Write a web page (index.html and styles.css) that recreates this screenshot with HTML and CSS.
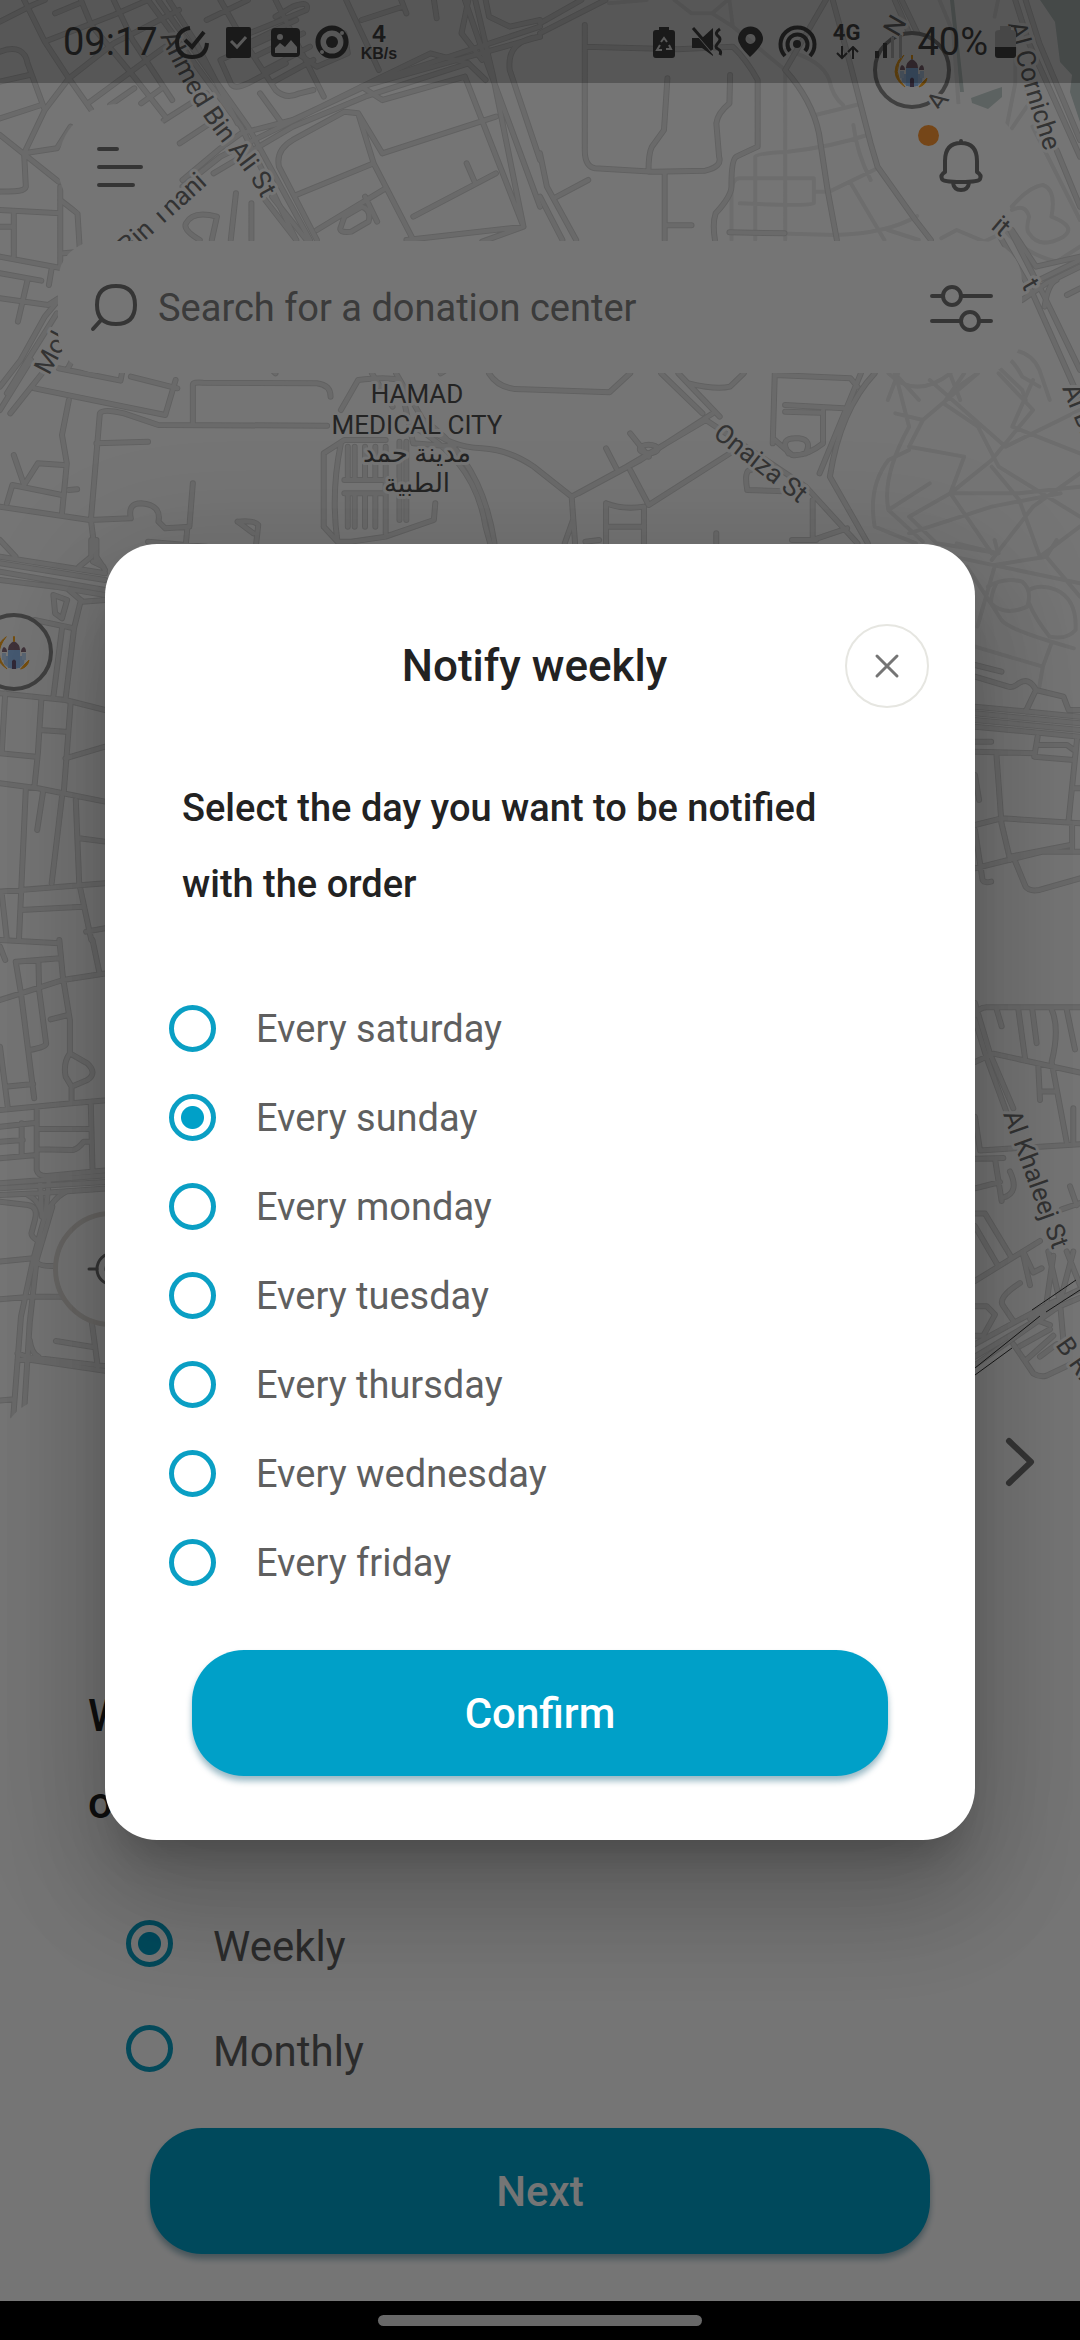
FILE: index.html
```html
<!DOCTYPE html>
<html lang="en">
<head>
<meta charset="utf-8">
<meta name="viewport" content="width=device-width, initial-scale=1">
<title>Notify weekly</title>
<link rel="stylesheet" href="styles.css">
</head>
<body>
<div class="phone">
  <div class="app">
    <main class="map-screen">
      <svg class="map" viewBox="0 0 1080 1430" preserveAspectRatio="xMidYMin slice" aria-hidden="true">
        <defs>
          <g id="roads">
            <!-- north west -->
            <g transform="scale(.3444 .3333)">
              <path d="M70 0L130 125L200 235L265 330M0 65L95 15L130 0M130 125L330 45L430 0M235 0L265 75L385 225L480 350M0 155C50 135 75 155 80 190L130 330M0 245L85 225M0 355L120 315M200 235L130 330L70 460L165 445L205 380M0 405L170 545M70 460L75 560C70 580 20 572 0 575M200 235L330 130L520 30M255 310L400 200L480 140M330 0L385 120L500 300M160 40L230 10M320 315L390 265M410 310L470 265M475 362L600 280M522 430L610 370M0 630L175 640M175 560L175 800M175 600L225 640L232 755L185 760M0 770L180 805M40 640L40 770M0 680L35 680M0 820L120 842M150 805L142 855M80 840L52 965M0 895L140 915L170 895M170 900L130 950L60 1080L0 1160M165 940L20 1180M170 1105L350 1142L355 1115M215 1070L195 1110M380 1130L515 1165"/>
              <path d="M430 0L700 380L860 720M460 0L720 380L900 720M490 0L570 130L690 370M530 560L640 470L1050 260L1568 110M530 540L640 445L700 400L850 360L1100 240L1568 80M620 520L850 380L1060 290L1360 190L1410 240"/>
              <path d="M640 0L700 110L800 270Q830 300 870 280L910 270M600 60L720 0M640 180L830 90M700 110L890 30Q900 0 850 20L800 50M720 130L860 60M740 170L880 100M770 210L900 140M795 245L910 180M800 0L940 290M640 180L670 250Q680 270 720 250L830 190M850 150L920 200L1010 160L1000 100M1005 0L1100 210M1050 260L1110 300M1050 60L1170 20M1165 0L1180 40M1260 0L1268 55M755 280L815 365M1350 0L1400 150L1568 620M1380 0L1430 220L1520 680M1410 0L1420 50L1480 80L1568 60M1568 110Q1470 120 1480 210L1568 480M1400 180L1340 100L1360 0M1360 190L1250 160L1050 260M1350 230L1110 300M1350 230L1520 680L1180 720M1110 460L1440 350M1110 460L1040 340L1000 335L850 420Q800 450 810 500L920 720M860 585L1085 490L1040 340M1085 490L1200 720M1120 565L920 690M1200 650L1440 520M1355 490L1380 550M990 680Q980 700 1020 695L1070 665Q1080 630 1050 620L1000 650ZM1060 590L1095 665M670 720L685 580M730 720V610M580 720Q530 690 540 670Q560 630 630 650L615 720M770 600L860 720M790 590L890 720M1400 725L1520 680"/>
            </g>
            <!-- north east -->
            <g transform="translate(540 0) scale(.3444 .3333)">
              <path d="M130 75V450Q130 500 160 505L330 515L480 512Q530 500 520 470L512 370Q515 340 550 310L552 225M130 140L400 148L560 140Q600 180 632 240V440L570 470Q555 480 556 560Q555 590 510 640Q500 670 508 720M370 235L360 390L325 440Q315 460 315 515M362 515V720M362 676H440M40 595L140 540M830 0L712 210Q790 300 810 400L835 570L862 720M850 0L900 190L960 430L980 500L1090 660L1135 720M0 460L20 560L105 720M0 590L65 720M550 697L710 700M0 100L190 0M0 70L120 0"/>
              <path d="M1030 0L1085 130M1050 0L1110 130M1380 0L1420 130L1568 470M1410 0L1450 130L1568 420M1500 450L1568 620M1330 700L1430 880L1568 1200M1360 680L1460 880L1568 1110M1430 850L1568 780M1400 900L1470 850L1568 800M1370 690L1440 800L1568 770M1465 920Q1475 850 1500 840M1530 885L1568 865"/>
            </g>
            <!-- below the search field -->
            <g transform="translate(0 360) scale(.6887 .3333)">
              <path d="M0 150L45 0M15 160L65 30M50 85L240 165L255 60M100 120L90 225L97 310L90 460M20 285L35 375L55 310L92 315M10 430L18 375L90 405M0 440L130 480L190 475Q185 430 205 430Q235 435 230 485L240 505L275 500L280 370M140 250L215 245M140 610L132 480L145 160Q150 145 180 160L230 195L475 197M280 190V75Q280 65 295 68L460 70Q480 75 480 110M135 605L150 620M300 560L215 545M272 505L270 550M345 485Q370 480 375 495L372 550M345 485L368 520M100 390L112 388M470 500V280L500 240L560 240M470 500L490 545H510L560 530L630 480L632 430M505 260V360M515 260V360M530 260V360M545 260V360M505 500V405M515 500V405M530 500V405M545 500V405M560 260V520M580 245V480M590 245V480M500 360H560M500 400H560M490 545Q480 400 495 250M495 150L520 60Q560 50 580 60L600 250L660 260M540 40L570 140M575 40L620 200Q650 260 700 265Q740 270 775 320L830 410M600 200Q690 300 705 500L712 552M615 180Q700 300 718 550M830 410L910 320L1025 180M840 400L930 300L1035 160M830 410L835 550M820 550L832 480M710 40Q725 90 760 88L885 97L915 40M960 40L1020 160M985 40L1045 170M1000 70Q1040 90 1060 80L1080 40M1125 40L1122 250M1125 45L1235 55L1245 80M1140 135L1225 145M1140 155L1190 158M1250 40L1190 340M1270 40Q1220 150 1205 350L1260 550M1025 180L1170 380L1245 550M1180 420V540L1230 505M1085 390Q1080 330 1090 330M1085 390L1160 395M1195 150V250Q1170 290 1150 285L1125 240M1145 280Q1130 230 1160 235Q1180 240 1170 280M915 220L942 290M880 265L895 325M915 330L942 435L1060 280M880 430Q905 450 935 440V550M880 430V550M880 500H935M1040 520V550M850 545L870 540M1150 540H1185"/>
              <circle cx="942" cy="267" r="13"/>
              <path d="M400 40L380 0M640 40L655 20"/>
            </g>
            <!-- west of the dialog -->
            <g transform="translate(0 540) scale(.3444 .3333)">
              <path d="M0 50L305 100M0 70L305 120M0 95L305 150M0 120L160 140L305 165M265 0V50L230 80M280 0V50L305 90M0 0L45 50M155 165L195 180L180 235L160 220ZM100 240L215 265M235 180L215 265L190 480M180 265L155 470M305 180L240 185L200 150M0 460L190 480L305 510M15 460L5 640M120 480L110 640L100 740M115 570L190 575M205 490L185 760M0 640L105 650M190 655L305 620M0 730L110 745L305 785M75 745L55 1200M125 755L108 870M180 770L150 1030M220 780L230 1030L265 1200M230 895L305 905M0 1055L305 1030M60 1110L240 1100M5 1060L20 1200M250 1175L305 1165"/>
            </g>
            <g transform="translate(0 940) scale(.3492 .3333)">
              <path d="M0 0L170 10M0 20L15 60M170 0L180 110L200 240V340L250 370Q280 400 250 420L205 440V485M200 340Q180 370 188 410L205 440M0 180L60 160L180 120L315 98M265 0L285 100M170 55L45 65L60 160L98 475M110 60L112 150L132 310Q135 320 85 330M145 238L195 225M0 320L22 500M15 440L95 432M0 510L205 490L315 480M105 510V690Q110 710 135 708L315 690M105 567H260M260 495L265 690M105 628L210 630Q225 625 240 605L260 605M0 560L105 548M0 605L65 600M62 550V645M0 655L105 645M0 730L315 705M0 745L315 725M0 765L110 760L315 745M0 785L80 795Q110 800 100 840L90 880Q90 890 105 900M115 730L120 830M140 720L130 830M80 765Q110 780 120 820M190 755Q140 780 120 860L95 960L60 1130L38 1430M150 800L105 960L85 1150L70 1400M0 965L95 955M105 965Q110 980 160 978M0 1078L90 1070H180M50 1240L75 1250L315 1280M50 1260L90 1260L315 1295M85 1200Q90 1240 110 1250M160 1203L270 1222M262 1140L280 1280M0 1382L40 1378"/>
            </g>
            <!-- east of the dialog -->
            <g transform="translate(540 540) scale(.3444 .3333)">
              <path d="M1263 410L1360 440Q1370 445 1390 430Q1420 410 1440 450L1520 470L1535 510H1568M1263 375L1340 395M1440 450L1410 515M1263 500L1568 530M1263 520L1568 550M1263 540L1568 570M1263 560L1568 590M1263 605H1310M1263 635L1435 640M1445 590L1435 650L1550 660M1450 615H1530L1550 630M1325 640L1340 850L1365 960M1263 855L1340 835L1568 850M1263 985L1360 960L1460 935L1568 935M1263 870L1285 1020Q1290 1030 1310 1025M1365 950L1540 915M1545 850V930M1560 590L1535 840M1380 965L1410 1040Q1420 1055 1450 1050L1568 1015M1263 705L1275 780M1548 745H1568"/>
            </g>
            <g transform="translate(860 940) scale(.3333 .4209)">
              <path d="M345 180Q355 160 380 160H660M345 190L380 280L440 410M345 150L390 270L460 400M345 290L400 270L660 315M410 165L425 205M475 165L495 280M517 165L530 245M575 165Q600 210 575 290L620 480M620 165L645 260M535 300L540 380M540 360H585M345 420L360 500L660 485M640 400V480M345 520L430 518M405 520L425 620M345 590L420 575M450 550Q480 600 430 612M345 650H375L455 755M345 680L415 775M345 810L540 715M490 750L510 820M490 740L520 790L545 780M605 640L660 625M630 585L650 630M345 960L460 910L580 860L660 830M345 990L450 940L600 870L660 850M345 1010L580 880M565 740L600 860L510 900M580 750L560 860M620 740L660 820M640 740L600 860L610 950M345 870H380L405 890L370 940H345M480 815Q410 850 430 870L460 905M460 960L520 1030Q540 1040 560 1035L640 1005M480 965L570 925M495 1000L580 940M540 990L590 960M520 900L570 915"/>
            </g>
          </g>
          <g id="paths">
            <g transform="translate(540 0) scale(.3444 .3333)">
              <path d="M200 10L310 0M390 0L440 40L500 40L545 0M500 40L560 80L550 0M560 80L712 210V720M712 150Q820 180 840 240Q850 290 880 315M800 345L930 312M625 720V470Q630 460 720 455Q850 440 950 405M556 720V570Q560 535 580 535H795V610Q790 620 580 610M795 575H840L980 505M910 375Q920 460 960 540M900 545L1000 720M556 697L860 705Q1010 700 1095 648M1010 690L1100 720M1160 0L1200 100L1215 310M1330 0L1320 50M1380 130V250L1355 380M1370 385L1420 310L1400 200M1370 620Q1420 560 1460 555Q1500 570 1485 650Q1560 680 1520 710Q1450 750 1420 700Q1410 690 1420 650Q1410 610 1370 630M1340 680Q1400 760 1500 785L1568 740M1430 380L1568 660M1165 715L1210 690L1290 725L1340 700M1375 1050Q1430 1060 1450 1110L1480 1200M1360 1075Q1380 1090 1400 1130L1450 1160M1330 1100L1400 1170L1410 1200M1030 1120L1100 1200M1040 1120L1010 1200M1190 1120L1220 1200M1200 1170L1270 1120"/>
            </g>
            <g transform="translate(0 360) scale(.6887 .3333)">
              <path d="M1290 40Q1330 120 1380 40M1300 40L1320 200Q1280 350 1290 450L1340 545M1300 160L1340 180L1320 260L1400 290L1380 400L1440 580M1400 40L1370 130L1420 200L1450 320L1568 470M1420 40L1340 180M1320 270L1290 300Q1260 380 1270 500L1330 550M1350 60L1460 260L1568 150M1450 40L1500 150L1440 300L1380 400L1320 470L1360 550L1450 580M1500 60L1470 200L1568 280M1380 400L1480 400L1568 380M1440 320L1480 420L1510 590L1568 500M1320 520L1440 440L1540 400M1290 450L1350 370M1568 340L1500 440L1440 600"/>
            </g>
            <g transform="translate(540 540) scale(.3444 .3333)">
              <path d="M1210 10L1330 40L1320 0M1200 50L1568 130M1320 75L1470 50L1500 0M1470 50L1568 170M1320 80L1270 260M1300 140Q1350 110 1400 125Q1430 150 1415 200Q1350 230 1310 190Q1310 160 1325 130M1420 150Q1450 130 1500 150Q1560 180 1555 270Q1530 300 1480 290Q1440 240 1420 190M1240 80L1340 240Q1360 270 1550 325M1263 320L1460 380L1450 440M1485 310L1460 380"/>
            </g>
          </g>
        </defs>
        <path class="water" d="M1040 0H1080V122L1070 92L1072 75L1060 62L1055 22Z"/>
        <path class="water" d="M971 98L982 94L993 90L1002 87V97L988 109L972 103ZM950 0H954L964 92H960Z"/>
        <use href="#paths" class="footpath"/>
        <use href="#roads" class="road-edge"/>
        <use href="#roads" class="road"/>
        <path class="rail" d="M975 1375L1012 1348M975 1368L1040 1316M1032 1310L1076 1280M1046 1312L1080 1290"/>

        <path id="ahmed" d="M160 36C185 90 200 115 232 155S264 205 272 222" fill="none"/>
        <text class="label"><textPath href="#ahmed">Ahmed Bin Ali St</textPath></text>
        <text class="label" transform="translate(128 256) rotate(-42)">Bin Thani</text>
        <text class="label" transform="translate(49 376) rotate(-62)">Mok</text>
        <g class="place" text-anchor="middle">
          <text x="417" y="403">HAMAD</text>
          <text x="417" y="434">MEDICAL CITY</text>
          <text x="417" y="462">مدينة حمد</text>
          <text x="417" y="492">الطبية</text>
        </g>
        <text class="label" transform="translate(712 436) rotate(38)">Onaiza St</text>
        <path id="corniche" d="M1008 24Q1024 90 1046 156" fill="none"/>
        <text class="label"><textPath href="#corniche">Al Corniche</textPath></text>
        <text class="label" transform="translate(1003 1114) rotate(70)">Al Khaleej St</text>
        <text class="label" transform="translate(1055 1345) rotate(55)">B Ring</text>
        <text class="label" transform="translate(1062 388) rotate(68)">Al Bidda</text>

        <g id="mosque" transform="translate(912 70)">
          <circle class="pin-ring" r="37"/>
          <path d="M-8 -15Q-22 2 -7 17Q-20 8 -16 -4Q-14 -11 -8 -15M10 13L15 8Q14 15 7 17Z" fill="#ffab20" stroke="#ffab20"/>
          <path d="M-11 4H11L10 12Q0 22 -10 12Z" fill="#b4d4fa"/>
          <path d="M-6 -2H6V16H-6Z" fill="#96c4f8"/>
          <path d="M-6 -2Q-6 -8 0 -11Q6 -8 6 -2ZM-12 0Q-12 -4 -10 -5Q-7 -4 -7 0ZM12 0Q12 -4 10 -5Q7 -4 7 0Z" fill="#8a6d7c"/>
          <path d="M-12 1H-8V8H-12ZM8 1H12V8H8Z" fill="#c5defa"/>
          <path d="M-2 17V9Q0 6 2 9V17Z" fill="#6b5a78"/>
          <path d="M0 -11V-15" stroke="#ffab20" stroke-width="2"/>
        </g>
        <use href="#mosque" x="-898" y="582"/>
        <text class="label" transform="translate(898 38) rotate(-60)">N</text>
        <text class="label" transform="translate(940 113) rotate(-55)">A</text>
        <text class="label" transform="translate(990 228) rotate(40)">it</text>
        <text class="label" transform="translate(1021 285) rotate(60)">t</text>
      </svg>

      <header class="top">
        <div class="toolbar">
          <button class="round-button" type="button" aria-label="Menu">
            <svg width="52" height="52" viewBox="0 0 52 52"><path d="M6 10H24M6 28H48M6 46H40" class="line-icon"/></svg>
          </button>
          <button class="round-button bell" type="button" aria-label="Notifications">
            <svg width="48" height="60" viewBox="0 0 48 60"><path d="M24 6V8M8 37V26Q8 8 24 8T40 26V37Q45 40 43 44Q42 47 24 47T5 44Q3 40 8 37M16 48Q17 55 24 55T32 48" class="line-icon"/></svg>
            <span class="badge"></span>
          </button>
        </div>
        <form class="search">
          <svg width="48" height="52" viewBox="0 0 48 52"><path d="M26 4Q45 4 45 23T26 42T7 23T26 4M12 37L3 47" class="line-icon"/></svg>
          <input type="search" aria-label="Search" placeholder="Search for a donation center">
          <button class="plain-button" type="button" aria-label="Filters">
            <svg width="64" height="52" viewBox="0 0 64 52"><path d="M2 14H12M32 14H61M2 39H30M50 39H61" class="line-icon"/><circle cx="22" cy="14" r="9" class="line-icon"/><circle cx="40" cy="39" r="9" class="line-icon"/></svg>
          </button>
        </form>
      </header>
      <button class="locate" type="button" aria-label="My location">
        <svg width="52" height="52" viewBox="0 0 52 52"><circle cx="28" cy="26" r="16" class="line-icon thin"/><circle cx="28" cy="26" r="7" class="line-icon thin"/><path d="M4 26H12M44 26H52M28 2V10M28 42V50" class="line-icon thin"/></svg>
      </button>
    </main>

    <section class="sheet">
      <div class="sheet-nav">
        <button class="plain-button" type="button" aria-label="Next slide">
          <svg width="36" height="56" viewBox="0 0 36 56"><path d="M7 7L29 28L7 49" class="chevron"/></svg>
        </button>
      </div>
      <h2 class="sheet-title">W<br>o</h2>
      <div class="frequency">
        <label class="option large"><input type="radio" name="frequency" checked><span>Weekly</span></label>
        <label class="option large"><input type="radio" name="frequency"><span>Monthly</span></label>
      </div>
      <button class="primary" type="button">Next</button>
    </section>

    <div class="scrim">
      <form class="dialog" role="dialog" aria-labelledby="dialog-title">
        <div class="dialog-head">
          <h1 id="dialog-title">Notify weekly</h1>
          <button class="close" type="button" aria-label="Close">
            <svg width="30" height="30" viewBox="0 0 30 30"><path d="M5 5L25 25M25 5L5 25"/></svg>
          </button>
        </div>
        <p class="question">Select the day you want to be notified with the order</p>
        <div class="days">
          <label class="option"><input type="radio" name="day"><span>Every saturday</span></label>
          <label class="option"><input type="radio" name="day" checked><span>Every sunday</span></label>
          <label class="option"><input type="radio" name="day"><span>Every monday</span></label>
          <label class="option"><input type="radio" name="day"><span>Every tuesday</span></label>
          <label class="option"><input type="radio" name="day"><span>Every thursday</span></label>
          <label class="option"><input type="radio" name="day"><span>Every wednesday</span></label>
          <label class="option"><input type="radio" name="day"><span>Every friday</span></label>
        </div>
        <button class="primary" type="button">Confirm</button>
      </form>
    </div>

    <div class="status">
      <div class="status-side">
        <span class="clock">09:17</span>
        <svg width="180" height="40" viewBox="172 21 180 40" aria-hidden="true">
          <path d="M190 27Q177 29 177 42Q178 56 192 56Q206 56 207 42M185 39L192 46L204 31" fill="none" stroke="currentColor" stroke-width="4"/>
          <rect x="226" y="26" width="25" height="31" rx="2"/>
          <path d="M231 40L237 46L246 36" fill="none" stroke="#5a5a5a" stroke-width="3"/>
          <rect x="271" y="27" width="29" height="29" rx="4"/>
          <path d="M275 52V47L280 42L285 46L291 39L297 46V52Z" fill="#585858"/>
          <circle cx="280" cy="36" r="3" fill="#585858"/>
          <circle cx="332" cy="41" r="14" fill="none" stroke="currentColor" stroke-width="5"/>
          <circle cx="332" cy="41" r="6"/>
          <circle cx="342" cy="32" r="2" fill="#585858"/><circle cx="322" cy="51" r="2" fill="#585858"/>
        </svg>
        <span class="speed"><b>4</b><small>KB/s</small></span>
      </div>
      <div class="status-side">
        <svg width="168" height="40" viewBox="650 21 168 40" aria-hidden="true">
          <path d="M659 29V26H669V29H672Q675 29 675 32V54Q675 57 672 57H656Q653 57 653 54V32Q653 29 656 29Z"/>
          <path d="M661 41L664 37L667 41M669 44L671 48H666M662 49H657L660 44" fill="none" stroke="#5a5a5a" stroke-width="2"/>
          <path d="M692 37H702L713 27V55L702 47H692Z"/>
          <path d="M694 29L716 55" stroke="#585858" stroke-width="3"/><path d="M693 27L712 49" stroke="currentColor" stroke-width="3"/>
          <path d="M720 28Q714 32 718 35T718 42T718 48T720 54" fill="none" stroke="currentColor" stroke-width="3"/>
          <path fill-rule="evenodd" d="M750 56Q738 44 738 38A12 12 0 0 1 763 38Q763 44 750 56ZM750 33A5 5 0 1 0 751 33Z"/>
          <circle cx="797" cy="43" r="4"/>
          <path d="M785 55A17 17 0 1 1 810 55M790 50A10 10 0 1 1 805 50" fill="none" stroke="currentColor" stroke-width="4"/>
        </svg>
        <span class="network"><b>4G</b><svg width="24" height="14" viewBox="0 0 24 14" aria-hidden="true"><path d="M7 0V12M2 7L7 12L12 7M18 13V1M13 6L18 1L23 6" fill="none" stroke="currentColor" stroke-width="2"/></svg></span>
        <svg width="28" height="34" viewBox="0 0 28 34" aria-hidden="true"><path d="M0 26H4V33H0ZM8 18H12V33H8Z"/><path d="M16 12H19V33H16ZM24 10H27V33H24Z" fill="#444"/></svg>
        <span class="battery-text">40%</span>
        <svg width="22" height="34" viewBox="0 0 22 34" aria-hidden="true"><path d="M5 5V1H16V5Q21 5 21 8V23H0V8Q0 5 5 5Z" fill="#474747"/><path d="M0 22H21V30Q21 33 18 33H3Q0 33 0 30Z"/></svg>
      </div>
    </div>
  </div>
  <div class="gesture-bar"><span></span></div>
</div>
</body>
</html>
```
FILE: styles.css
```css
* { box-sizing: border-box; }

body {
  margin: 0;
  font-family: Roboto, "Liberation Sans", sans-serif;
  font-size: 38px;
  color: #222;
  background: #fff;
}

button, input { font: inherit; color: inherit; }
button { border: 0; padding: 0; background: none; cursor: pointer; }
svg { display: block; }

.phone { min-height: 100vh; display: flex; flex-direction: column; }
.app { position: relative; flex: 1; display: flex; flex-direction: column; }

/* map */
.map-screen {
  position: relative;
  flex: 1;
  display: flex;
  flex-direction: column;
  justify-content: space-between;
  align-items: flex-start;
  padding: 104px 58px 71px 53px;
}
.map { position: absolute; top: 0; left: 0; width: 100%; height: calc(100% + 32px); }
.map use { fill: none; stroke-linecap: round; stroke-linejoin: round; }
.map path, .map circle { vector-effect: non-scaling-stroke; }
.map .road-edge { stroke: #d4d4d4; stroke-width: 6px; }
.map .road { stroke: #e8e8e8; stroke-width: 4px; }
.map .footpath { stroke: #ededed; stroke-width: 4px; }
.rail { fill: none; stroke: #333; stroke-width: 1px; }
.water { fill: #c9d6d3; }
.label, .place {
  font-size: 26px;
  fill: #707070;
  stroke: #fff;
  stroke-width: 6px;
  stroke-linejoin: round;
  paint-order: stroke;
}
.place { fill: #505050; font-family: Roboto, "DejaVu Sans", sans-serif; }
.pin-ring { fill: #fff; stroke: #8c8c8c; stroke-width: 4px; }

.top { position: relative; width: 100%; padding-left: 5px; display: grid; gap: 15px; }
.toolbar { display: flex; justify-content: space-between; }
.round-button {
  position: relative;
  width: 122px;
  height: 122px;
  display: grid;
  place-items: center;
  border-radius: 50%;
  background: #fff;
}
.badge {
  position: absolute;
  top: 21px;
  left: 18px;
  width: 21px;
  height: 21px;
  border-radius: 50%;
  background: #ff9a35;
}
.line-icon { fill: none; stroke: #757575; stroke-width: 4px; stroke-linecap: round; stroke-linejoin: round; }
.line-icon.thin { stroke-width: 3px; }
.chevron { fill: none; stroke: #757575; stroke-width: 6px; stroke-linecap: round; stroke-linejoin: round; }

.search {
  display: flex;
  align-items: center;
  height: 132px;
  padding: 2px 28px 0 32px;
  border-radius: 40px;
  background: #fff;
}
.search input {
  flex: 1;
  min-width: 0;
  margin-left: 20px;
  padding: 0;
  border: 0;
  outline: 0;
  background: none;
  appearance: none;
}
.search input::placeholder { color: #808080; opacity: 1; }

.locate {
  position: relative;
  width: 116px;
  height: 116px;
  display: grid;
  place-items: center;
  border: 5px solid #e2dfdb;
  border-radius: 50%;
  background: #fff;
}

/* bottom sheet */
.sheet {
  position: relative;
  display: flex;
  flex-direction: column;
  padding-bottom: 47px;
  border-radius: 52px 52px 0 0;
  background: #fff;
}
.sheet-nav { display: flex; align-items: center; justify-content: flex-end; height: 128px; padding-right: 42px; }
.sheet-title { margin: 147px 88px 44px; font-size: 44px; line-height: 87px; font-weight: 500; }
.frequency { padding-left: 126px; }
.sheet .primary { margin: 27px 150px 0; }

.option { display: flex; align-items: center; gap: 40px; height: 89px; color: #5f5f5f; cursor: pointer; }
.option.large { height: 105px; font-size: 42px; }
.option.large span { padding-top: 6px; }
.option input {
  appearance: none;
  flex: none;
  width: 47px;
  height: 47px;
  margin: 0;
  border: 5px solid #0a9fc4;
  border-radius: 50%;
}
.option input:checked { background: radial-gradient(circle, #00a0c8 11px, transparent 12px); }

.primary {
  height: 126px;
  border-radius: 52px;
  background: #00a0c8;
  color: #fff;
  font-size: 42px;
  font-weight: 500;
  box-shadow: 0 5px 6px rgba(0, 80, 110, .4);
}

/* dialog */
.scrim {
  position: absolute;
  inset: 0;
  display: flex;
  align-items: center;
  padding: 83px 105px 0;
  background: rgba(0, 0, 0, .54);
}
.dialog {
  flex: 1;
  display: flex;
  flex-direction: column;
  padding: 80px 46px 64px;
  border-radius: 52px;
  background: #fff;
  box-shadow: 0 29px 39px -18px rgba(0, 0, 0, .2), 0 63px 99px 8px rgba(0, 0, 0, .14), 0 24px 120px 21px rgba(0, 0, 0, .12);
}
.dialog-head { display: grid; grid-template-columns: 1fr 84px; align-items: center; padding-left: 73px; }
.dialog-head h1 { margin: 0; font-size: 44px; font-weight: 500; text-align: center; }
.close {
  width: 84px;
  height: 84px;
  display: grid;
  place-items: center;
  border: 2px solid #e6e6e1;
  border-radius: 50%;
}
.close path { fill: none; stroke: #757575; stroke-width: 3px; stroke-linecap: round; }
.question { margin: 62px 80px 62px 31px; font-weight: 500; line-height: 76px; }
.days { padding: 0 18px; }
.dialog .primary { margin: 43px 41px 0; }

/* system bars */
.status {
  position: absolute;
  top: 0;
  left: 0;
  right: 0;
  height: 83px;
  display: flex;
  align-items: center;
  justify-content: space-between;
  padding: 0 63px;
  background: rgba(0, 0, 0, .25);
  color: #1a1a1a;
}
.status svg { fill: currentColor; }
.status-side { display: flex; align-items: center; }
.clock { margin-right: 14px; }
.speed { display: grid; justify-items: center; margin-left: 9px; font-family: "Liberation Sans", sans-serif; font-weight: 700; }
.speed b { font-size: 24px; line-height: 24px; }
.speed small { font-size: 16px; line-height: 16px; }
.network { display: grid; gap: 4px; justify-items: center; margin: 0 15px; font-size: 22px; line-height: 18px; }
.battery-text { margin: 0 7px 0 14px; }

.gesture-bar { height: 39px; display: grid; place-items: center; background: #000; }
.gesture-bar span { width: 324px; height: 11px; border-radius: 6px; background: #686868; }
```
